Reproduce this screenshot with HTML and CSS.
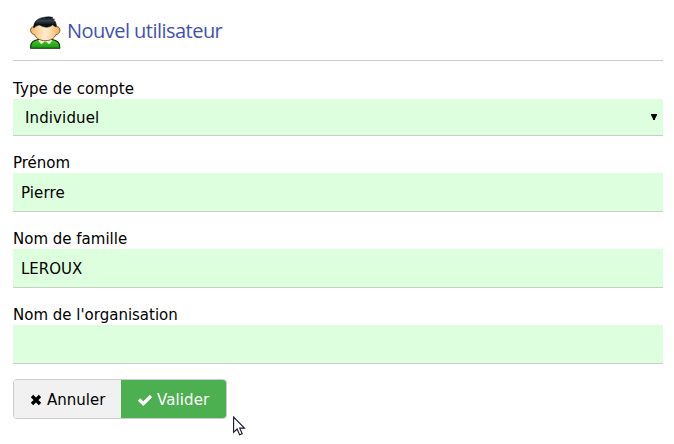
FILE: index.html
```html
<!DOCTYPE html>
<html lang="fr">
<head>
<meta charset="utf-8">
<title>Nouvel utilisateur</title>
<link rel="stylesheet" href="styles.css">
</head>
<body>
<main class="page">
  <header class="header">
    <svg class="avatar" width="32" height="34" viewBox="0 0 32 34" aria-hidden="true">
      <defs>
        <linearGradient id="skin" x1="0" x2="1"><stop offset="0" stop-color="#f6b461"/><stop offset=".3" stop-color="#ffd9a6"/><stop offset=".5" stop-color="#ffecd2"/><stop offset=".7" stop-color="#ffd9a6"/><stop offset="1" stop-color="#f5ae58"/></linearGradient>
        <linearGradient id="shirt" x1="0" x2="0" y1="0" y2="1"><stop offset="0" stop-color="#55c42c"/><stop offset="1" stop-color="#149a12"/></linearGradient>
        <linearGradient id="hair" x1="0" x2="0" y1="0" y2="1"><stop offset="0" stop-color="#0a1016"/><stop offset=".35" stop-color="#34424d"/><stop offset=".7" stop-color="#0b1014"/></linearGradient>
      </defs>
      <path d="M1.700 32.200v-2c0-3.300 2.500-5.700 7.500-6.700h14c5 1 7.500 3.400 7.500 6.700v2z" fill="url(#shirt)" stroke="#082d07" stroke-width="1.100"/>
      <path d="M10.500 22.500h11.500l1 2.500-2.800 3.300-3.900-3.300-4 3.300-2.800-3.300z" fill="#e7f7d9"/>
      <path d="M12.500 22h7.500l-.7 2.500-3 1.500-3-1.500z" fill="#f4bd7b"/>
      <path d="M5 10.500c-2.500.2-3.500 2-3.400 4 .2 2.300 1.700 3.700 3.900 4 1.500 3.700 5.300 6.200 10.800 6.200s9.200-2.500 10.700-6.200c2.300-.2 3.700-1.700 3.900-3.900.1-2.300-1-3.900-3.400-4.100L26 5H7z" fill="url(#skin)" stroke="#6b3b0d" stroke-width=".8"/>
      <path d="M4.700 12C4.200 6.500 8 2 14.500 1.400c3-.6 6.500-.9 9.500.1l-2 .8 3.600 1-1.800.7c2.800 1.600 3.700 4.500 3.400 7-1.500-.3-2.700-1.200-3.400-2.200-3.500 3-8.300 3.200-13 .3-2 .1-4 1-6.100 2.900z" fill="url(#hair)" stroke="#05090c" stroke-width=".5"/>
    </svg>
    <h1 class="title">Nouvel utilisateur</h1>
  </header>
  <form class="form">
    <div class="field field-select">
      <label class="label wide" for="type">Type de compte</label>
      <div class="select-wrap">
        <div class="input select" id="type">Individuel</div>
        <svg class="arrow" width="6" height="6" viewBox="0 0 6 6" aria-hidden="true"><path d="M0 0h6v1L4 5v1H2V5L0 1z"/></svg>
      </div>
    </div>
    <div class="field">
      <label class="label" for="first">Prénom</label>
      <input class="input wide" id="first" type="text" value="Pierre">
    </div>
    <div class="field">
      <label class="label" for="last">Nom de famille</label>
      <input class="input" id="last" type="text" value="LEROUX">
    </div>
    <div class="field">
      <label class="label" for="org">Nom de l'organisation</label>
      <input class="input" id="org" type="text">
    </div>
    <div class="actions">
      <button class="btn cancel" type="button">
        <svg width="12" height="12" viewBox="0 0 12 12" aria-hidden="true"><path d="M2 2l8 8M10 2l-8 8" stroke="#000" stroke-width="3.400"/></svg>
        <span>Annuler</span>
      </button>
      <button class="btn submit" type="button">
        <svg width="16" height="12" viewBox="0 0 16 12" aria-hidden="true"><path d="M2 5.500L6.300 9.700L14 2" fill="none" stroke="#fff" stroke-width="3.200"/></svg>
        <span class="wide">Valider</span>
      </button>
    </div>
  </form>
  <svg class="cursor" width="13" height="20" viewBox="0 0 13 20" aria-hidden="true"><path d="M.6 1v15.300l3.500-3.300 2.500 5.800 2.600-1.100-2.500-5.600h4.800z" fill="#fff" stroke="#15152b" stroke-width="1.100"/></svg>
</main>
</body>
</html>
```
FILE: styles.css
```css
* { box-sizing: border-box; }
body {
  margin: 0;
  background: #fff;
  color: #000;
  font: 15px/22px Verdana, "DejaVu Sans", sans-serif;
}
.page { width: 674px; height: 444px; padding: 0 11px 0 13px; overflow: hidden; position: relative; }
.header {
  display: flex;
  height: 61px;
  padding: 16px 0 0 16px;
  border-bottom: 1px solid #ccc;
}
.avatar { flex: none; }
.title {
  margin: 0 0 0 6px;
  font: 400 20px/30px "Segoe UI", "Open Sans", sans-serif;
  letter-spacing: -.53px;
  color: #3f51b5;
  white-space: nowrap;
}
.form { padding-top: 16px; }
.field { height: 76px; }
.field-select { height: 74px; }
.label { display: block; width: max-content; height: 22px; line-height: 25px; }
.wide { letter-spacing: .12px; }
.input {
  display: block;
  width: 100%;
  height: 39px;
  margin: 0;
  padding: 8px;
  border: 0;
  border-bottom: 1px solid #ccc;
  border-radius: 0;
  outline: 0;
  background: #dfd;
  color: #000;
  font: inherit;
}
.input:not(.select) { padding-top: 10px; }
.select-wrap { position: relative; }
.select { height: 37px; padding: 8px 12px; letter-spacing: .12px; }
.arrow { position: absolute; right: 6px; top: 15px; }
.actions {
  display: flex;
  width: 214px;
  height: 40px;
  border: 1px solid #ccc;
  border-radius: 4px;
  overflow: hidden;
}
.btn {
  display: flex;
  align-items: center;
  height: 38px;
  margin: 0;
  padding: 2px 0 0 16px;
  border: 0;
  font: inherit;
  white-space: nowrap;
}
.cancel { width: 107px; gap: 5px; background: #f1f1f1; color: #000; }
.submit { width: 105px; gap: 4px; background: #4caf50; color: #fff; }
.cursor { position: absolute; left: 233px; top: 416px; }
```
